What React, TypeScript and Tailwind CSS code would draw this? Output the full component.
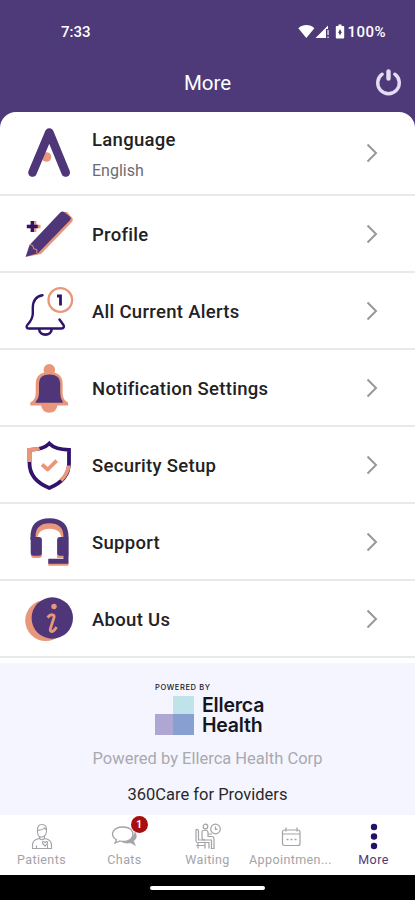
import React from "react";

export default function App() {
  return (
    <div className="flex h-[900px] w-[415px] flex-col overflow-hidden bg-[#4e3a79] font-[Roboto,sans-serif]">
      <StatusBar />
      <header className="grid h-[48px] grid-cols-[1fr_auto_1fr] items-start px-[13px] pt-[5px] text-white">
        <span />
        <h1 className="mt-0.5 text-[20.5px] leading-6">More</h1>
        <PowerIcon />
      </header>

      <main className="min-h-0 flex-1 overflow-hidden rounded-t-[16px] bg-white">
        {items.map((item) => (
          <MenuRow key={item.title} {...item} />
        ))}
        <section className="mt-[5px] flex h-[153px] flex-col items-center bg-[#f5f5ff]">
          <BrandLogo />
          <p className="mt-[13px] text-[16.5px] leading-[22px] text-[#a9a9ae]">
            Powered by Ellerca Health Corp
          </p>
          <p className="mt-3.5 text-[16.5px] leading-[22px] text-[#28282c]">
            360Care for Providers
          </p>
        </section>
      </main>

      <nav className="grid h-[60px] grid-cols-5 bg-white">
        {tabs.map((tab) => (
          <div
            key={tab.label}
            className={`flex flex-col items-center pt-[7px] ${tab.active ? "text-[#4e3a79]" : "text-[#a3a3a8]"}`}
          >
            <div className="relative">
              {tab.icon}
              {tab.badge && (
                <span className="absolute -top-1.5 left-[21px] flex size-[17px] items-center justify-center rounded-full bg-[#a80d10] text-[10px] font-bold text-white">
                  {tab.badge}
                </span>
              )}
            </div>
            <span className="mt-px text-[12.5px] leading-4 tracking-[0.4px]">{tab.label}</span>
          </div>
        ))}
      </nav>
      <div className="flex h-[25px] items-center justify-center bg-black">
        <div className="h-1 w-[115px] rounded-full bg-white" />
      </div>
    </div>
  );
}

function StatusBar() {
  return (
    <div className="flex h-[64px] items-center justify-between pl-[61px] pr-[29px] text-[15px] font-medium text-white">
      <span>7:33</span>
      <div className="flex items-center">
        <svg width="50" height="18" viewBox="0 0 50 18" fill="currentColor">
          <path d="M0.3 5.3C5 1 12 1 16.4 5.3L8.3 15Z" />
          <path d="M17.5 15 30 2.500V6H28V15Z" />
          <path d="M29.300 7h1.500v5h-1.500zM29.300 13.400h1.500V15h-1.500z" opacity="0.75" />
          <path d="M40.500 1.500h3V3h1.800q.9 0 .9.9v10.700q0 .9-.9.9h-6.600q-.9 0-.9-.9V3.900q0-.9.9-.9h1.800Z" />
          <path d="M42 6l1.500 3.300L42 12.600 40.500 9.300Z" fill="#4e3a79" />
        </svg>
        <span className="-ml-px tracking-[0.5px]">100%</span>
      </div>
    </div>
  );
}

function PowerIcon() {
  return (
    <svg className="justify-self-end" width="27" height="28" viewBox="0 0 27 28" fill="none" stroke="#e4dcf2" strokeWidth="3.400">
      <path d="M7.200 5.200A10.800 10.800 0 1 0 19.800 5.200" strokeLinecap="round" />
      <path d="M13.500 2.500v7" strokeWidth="4.400" strokeLinecap="round" />
    </svg>
  );
}

type MenuItem = { title: string; subtitle?: string; icon: React.ReactNode };

function MenuRow({ title, subtitle, icon }: MenuItem) {
  return (
    <div
      className={`flex items-center border-b-2 border-[#e9e9eb] pl-[22px] pr-[36px] ${subtitle ? "h-[84px]" : "h-[77px]"}`}
    >
      <svg width="54" height="54" viewBox="0 0 54 54" fill="none" className="mr-4 shrink-0">
        {icon}
      </svg>
      <div className="flex-1 pt-[3px]">
        <div className="text-[18.500px] font-medium leading-6 tracking-[0.3px] text-[#222225]">{title}</div>
        {subtitle && <div className="mt-2 text-[16px] leading-[22px] text-[#6c6c70]">{subtitle}</div>}
      </div>
      <svg width="14" height="22" viewBox="0 0 14 22" fill="none" stroke="#98989b" strokeWidth="2">
        <path d="M2.500 2.500 11 11l-8.500 8.500" />
      </svg>
    </div>
  );
}

function BrandLogo() {
  return (
    <div className="mt-5 w-[105px] font-[Inter,sans-serif] text-[#15171f]">
      <div className="h-[13px] whitespace-nowrap text-[7.5px] font-medium leading-[9px] tracking-[0.600px]">POWERED BY</div>
      <div className="flex">
        <div className="grid h-[39px] w-[39px] shrink-0 grid-cols-[18px_21px] grid-rows-[18px_21px]">
          <div />
          <div className="bg-[#bfe3e8]" />
          <div className="bg-[#aea6d3]" />
          <div className="bg-[#889fd2]" />
        </div>
        <div className="-mt-px ml-2 text-[19.500px] font-semibold leading-5 tracking-[-0.2px]">
          <div>Ellerca</div>
          <div>Health</div>
        </div>
      </div>
    </div>
  );
}

const purple = "#4e3679";
const navy = "#30136d";
const peach = "#e9977a";

const items: MenuItem[] = [
  {
    title: "Language",
    subtitle: "English",
    icon: (
      <>
        <circle cx="24.500" cy="31" r="4.800" fill={peach} />
        <path d="M10.500 46.500 27.300 6.500 43.700 46.500" stroke={purple} strokeWidth="8.600" strokeLinecap="round" strokeLinejoin="round" />
      </>
    ),
  },
  {
    title: "Profile",
    icon: (
      <>
        <path d="M12.500 14v11M7 19.500h11.500" stroke={peach} strokeWidth="3.700" />
        <path d="M10.300 14v11M4.800 19.500h11" stroke={navy} strokeWidth="3.400" />
        <path d="M42 5.500q2-1.500 3.500 0l4.500 5q1.500 2 0 4.500L19 47 3.700 50 9 38Z" fill={peach} />
        <path d="M38.500 5.200q2-1.500 4 0l5.500 4.500q1.500 1.500 0 3.500L16 46.300 3.700 49.700 7.500 38Z" fill={purple} />
        <path d="m7.800 37.500 3 1 .8 3.300 3.200.7v3.500" stroke={peach} />
      </>
    ),
  },
  {
    title: "All Current Alerts",
    icon: (
      <>
        <path
          d="M20.500 11.300C13.500 12.500 10.800 18 10.800 24v5.500c0 5-2.300 8-5.300 11.300-1.800 2-.7 3.700 1 3.700H39.500c2.500 0 3-2 1.800-3.700l-3.800-5.300"
          stroke={navy}
          strokeWidth="2.400"
          strokeLinecap="round"
        />
        <path d="M17.200 45c0 7.500 12.400 7.500 12.400 0" stroke={navy} strokeWidth="2.600" />
        <circle cx="38.300" cy="16" r="11.800" stroke={peach} strokeWidth="2.300" />
        <path d="M35 12h3.500v9.500" stroke={navy} strokeWidth="2.800" />
      </>
    ),
  },
  {
    title: "Notification Settings",
    icon: (
      <>
        <circle cx="27.300" cy="8.800" r="5.800" fill={peach} />
        <path d="M13.700 23q0-12 13.500-12t13.400 12v9q0 7 5.500 9.500v2.900H8.300v-2.900q5.400-2.500 5.400-9.500Z" fill={peach} />
        <path d="M19 44h16.500q-1 7.700-8.200 7.700T19 44Z" fill={peach} />
        <path d="M17 22q0-8.500 10.500-8.500T38.200 22v10q0 5 2.500 8.500v1.300H13.700v-1.300q3.300-3.500 3.300-8.500Z" fill={purple} />
      </>
    ),
  },
  {
    title: "Security Setup",
    icon: (
      <g strokeWidth="3.800">
        <path d="M27.300 5.500Q33 11.500 47 11.800V25q0 17-19.700 25Q7.500 42 7.500 25V11.800Q21.500 11.500 27.300 5.500Z" stroke={navy} />
        <path d="M17.500 10.500Q13.500 11.700 7.500 11.800V24" stroke={peach} />
        <path d="M46.800 27.500Q45.500 36 39 42.300" stroke={peach} />
        <path d="m20 26.500 5.700 5 9-8.800" stroke={peach} strokeLinejoin="round" />
      </g>
    ),
  },
  {
    title: "Support",
    icon: (
      <>
        <path d="M12 24q1-13.500 15.500-13.500T43 24" stroke={peach} strokeWidth="6.500" />
        <path d="M9 24h11v16q0 3-3 3h-5q-3 0-3-3ZM26.300 45.500h20v5.200h-20zM35 25h11v18H35z" fill={peach} />
        <path d="M11 25v-3Q11 5.800 27.500 5.800T44 22v24.200H26.300" stroke={purple} strokeWidth="5" />
        <path d="M8.700 22H17q2.800 0 2.800 2.800V38q0 2.800-2.800 2.800h-5.500q-2.800 0-2.800-2.800ZM46.300 22H38q-2.800 0-2.800 2.800V38q0 2.800 2.800 2.800h8.300Z" fill={purple} />
      </>
    ),
  },
  {
    title: "About Us",
    icon: (
      <>
        <circle cx="23.700" cy="28.500" r="20.500" fill={peach} />
        <circle cx="30.300" cy="26" r="20.700" fill={purple} />
        <circle cx="32" cy="14.500" r="2.700" fill={peach} />
        <path d="M25.500 25.500q2.500-3 5-2.700 2.300.3 1.400 3l-3.400 10.500q-.8 3 1 3.200 2.500 0 5-4.500" stroke={peach} strokeWidth="2.800" />
      </>
    ),
  },
];

const tabs = [
  {
    label: "Patients",
    icon: (
      <svg width="30" height="29" viewBox="0 0 30 29" fill="none" stroke="currentColor" strokeWidth="1.100">
        <path d="M10.500 9q-.5-6.500 4.500-6.500T19.500 9q0 5-4.500 6t-4.500-6ZM10.500 8q5 .5 7-2l2 2M12.500 14v3M17.500 14v3" />
        <path d="M12.500 16.500c-5 .5-7 3-7 7v3h19v-3c0-4-2-6.500-7-7q-2.500 2.500-5 0ZM9.500 26.500v-3M20.500 26.500v-4" />
        <path d="m18 24-2.500-2.500q-.5-2 1-2l1.500 1 1.500-1q1.500 0 1 2Z" />
      </svg>
    ),
  },
  {
    label: "Chats",
    badge: "1",
    icon: (
      <svg width="30" height="29" viewBox="0 0 30 29" fill="none" stroke="currentColor" strokeWidth="1.300">
        <path d="M6.500 17.800C-1.500 12.500 4 5 12.500 5S24 9.500 22.500 14.500C21 19 14.500 20.300 10 19l-5 2Z" />
        <path d="M25 10q3.500 6-1.500 9l2 4.500-5-2.700q-5 1-8-.8 10 0 12.500-10Z" fill="currentColor" strokeWidth="0.500" />
      </svg>
    ),
  },
  {
    label: "Waiting",
    icon: (
      <svg width="30" height="29" viewBox="0 0 30 29" fill="none" stroke="currentColor" strokeWidth="1.200">
        <circle cx="22.500" cy="7" r="4.800" />
        <path d="M22.500 4.500v2.800h2M3 7.500q2.500-.5 2.500 2v8.500h7M3 7.500V19q0 1.500 2 1.500h11v6M5 20.500v6M12 20.500v6M3 23.500h9" />
        <circle cx="12.500" cy="4.500" r="2.300" />
        <path d="M10 8.500q5-1 5 2v4h4q2 0 2 2.500v9.500h-2.500V18h-7q-2.500 0-2.500-2.500v-5q0-2 1-2ZM15 12h4" />
      </svg>
    ),
  },
  {
    label: "Appointmen...",
    icon: (
      <svg width="30" height="29" viewBox="0 0 30 29" fill="none" stroke="currentColor" strokeWidth="1.200">
        <rect x="6.500" y="8" width="17.500" height="15.500" rx="2" />
        <path d="M6.500 12h17.500M10 5.500v4M21 5.500v4" />
        <path d="M10.500 17.500h2M14.500 17.500h2M18.500 17.500h2" strokeWidth="1.700" />
      </svg>
    ),
  },
  {
    label: "More",
    active: true,
    icon: (
      <svg width="30" height="29" viewBox="0 0 30 29" fill="#23106a">
        <circle cx="15" cy="5" r="3.200" />
        <circle cx="15" cy="14.500" r="3.200" />
        <circle cx="15" cy="24" r="3.200" />
      </svg>
    ),
  },
];
